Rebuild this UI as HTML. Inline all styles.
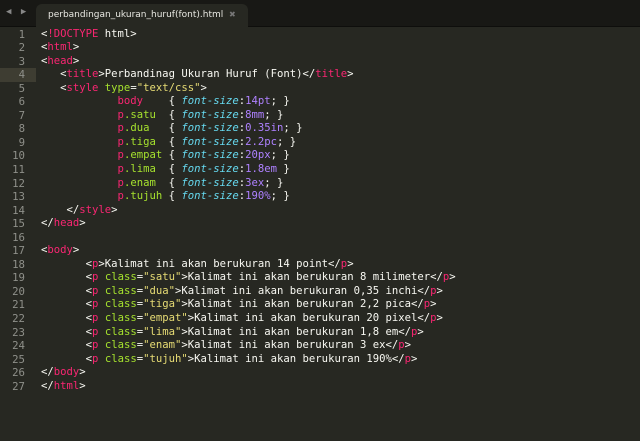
<!DOCTYPE html>
<html><head><style>
body{margin:0;width:640px;height:441px;background:#272822;overflow:hidden;position:relative;font-family:"DejaVu Sans Mono","Liberation Mono",monospace}
.bar{position:absolute;left:0;top:0;width:640px;height:26px;background:#181815;border-bottom:1px solid #0e0e0c}
.tab{position:absolute;left:36px;top:4px;width:212px;height:23px;background:#272822;border-radius:6px 6px 0 0;font-family:"DejaVu Sans","Liberation Sans",sans-serif;font-size:9px;color:#e8e8e2;line-height:22px;padding-left:12px;box-sizing:border-box}
.x{position:absolute;left:193px;top:0;color:#777;font-size:8px}
.arr{position:absolute;top:7px;color:#888;font-size:9px;letter-spacing:2px;left:6px}
.code{position:absolute;left:0;top:27.5px;font-size:10.6px;line-height:13.54px;white-space:pre;color:#f8f8f2}
.ln{position:absolute;left:0;width:25px;text-align:right;color:#8f908a;top:27.5px;font-size:10.7px;line-height:13.54px;white-space:pre}
.hl{position:absolute;left:0;top:68.1px;width:36px;height:13.54px;background:#3e3d32}
.src{position:absolute;left:41px;top:0}
.t{color:#f92672}.a{color:#a6e22e}.s{color:#e6db74}.n{color:#ae81ff}.p{color:#66d9ef;font-style:italic}
</style></head><body>
<div class="bar"><div class="arr">◀ ▶</div><div class="tab">perbandingan_ukuran_huruf(font).html<span class="x">✖</span></div></div>
<div class="hl"></div>
<div class="ln">1
2
3
4
5
6
7
8
9
10
11
12
13
14
15
16
17
18
19
20
21
22
23
24
25
26
27</div>
<div class="code"><div class="src">&lt;<span class="t">!DOCTYPE</span> html&gt;
&lt;<span class="t">html</span>&gt;
&lt;<span class="t">head</span>&gt;
   &lt;<span class="t">title</span>&gt;Perbandinag Ukuran Huruf (Font)&lt;/<span class="t">title</span>&gt;
   &lt;<span class="t">style</span> <span class="a">type</span>=<span class="s">"text/css"</span>&gt;
            <span class="t">body</span>    { <span class="p">font-size</span>:<span class="n">14pt</span>; }
            <span class="t">p</span><span class="a">.satu</span>  { <span class="p">font-size</span>:<span class="n">8mm</span>; }
            <span class="t">p</span><span class="a">.dua</span>   { <span class="p">font-size</span>:<span class="n">0.35in</span>; }
            <span class="t">p</span><span class="a">.tiga</span>  { <span class="p">font-size</span>:<span class="n">2.2pc</span>; }
            <span class="t">p</span><span class="a">.empat</span> { <span class="p">font-size</span>:<span class="n">20px</span>; }
            <span class="t">p</span><span class="a">.lima</span>  { <span class="p">font-size</span>:<span class="n">1.8em</span> }
            <span class="t">p</span><span class="a">.enam</span>  { <span class="p">font-size</span>:<span class="n">3ex</span>; }
            <span class="t">p</span><span class="a">.tujuh</span> { <span class="p">font-size</span>:<span class="n">190%</span>; }
    &lt;/<span class="t">style</span>&gt;
&lt;/<span class="t">head</span>&gt;

&lt;<span class="t">body</span>&gt;
       &lt;<span class="t">p</span>&gt;Kalimat ini akan berukuran 14 point&lt;/<span class="t">p</span>&gt;
       &lt;<span class="t">p</span> <span class="a">class</span>=<span class="s">"satu"</span>&gt;Kalimat ini akan berukuran 8 milimeter&lt;/<span class="t">p</span>&gt;
       &lt;<span class="t">p</span> <span class="a">class</span>=<span class="s">"dua"</span>&gt;Kalimat ini akan berukuran 0,35 inchi&lt;/<span class="t">p</span>&gt;
       &lt;<span class="t">p</span> <span class="a">class</span>=<span class="s">"tiga"</span>&gt;Kalimat ini akan berukuran 2,2 pica&lt;/<span class="t">p</span>&gt;
       &lt;<span class="t">p</span> <span class="a">class</span>=<span class="s">"empat"</span>&gt;Kalimat ini akan berukuran 20 pixel&lt;/<span class="t">p</span>&gt;
       &lt;<span class="t">p</span> <span class="a">class</span>=<span class="s">"lima"</span>&gt;Kalimat ini akan berukuran 1,8 em&lt;/<span class="t">p</span>&gt;
       &lt;<span class="t">p</span> <span class="a">class</span>=<span class="s">"enam"</span>&gt;Kalimat ini akan berukuran 3 ex&lt;/<span class="t">p</span>&gt;
       &lt;<span class="t">p</span> <span class="a">class</span>=<span class="s">"tujuh"</span>&gt;Kalimat ini akan berukuran 190%&lt;/<span class="t">p</span>&gt;
&lt;/<span class="t">body</span>&gt;
&lt;/<span class="t">html</span>&gt;</div></div>
</body></html>
